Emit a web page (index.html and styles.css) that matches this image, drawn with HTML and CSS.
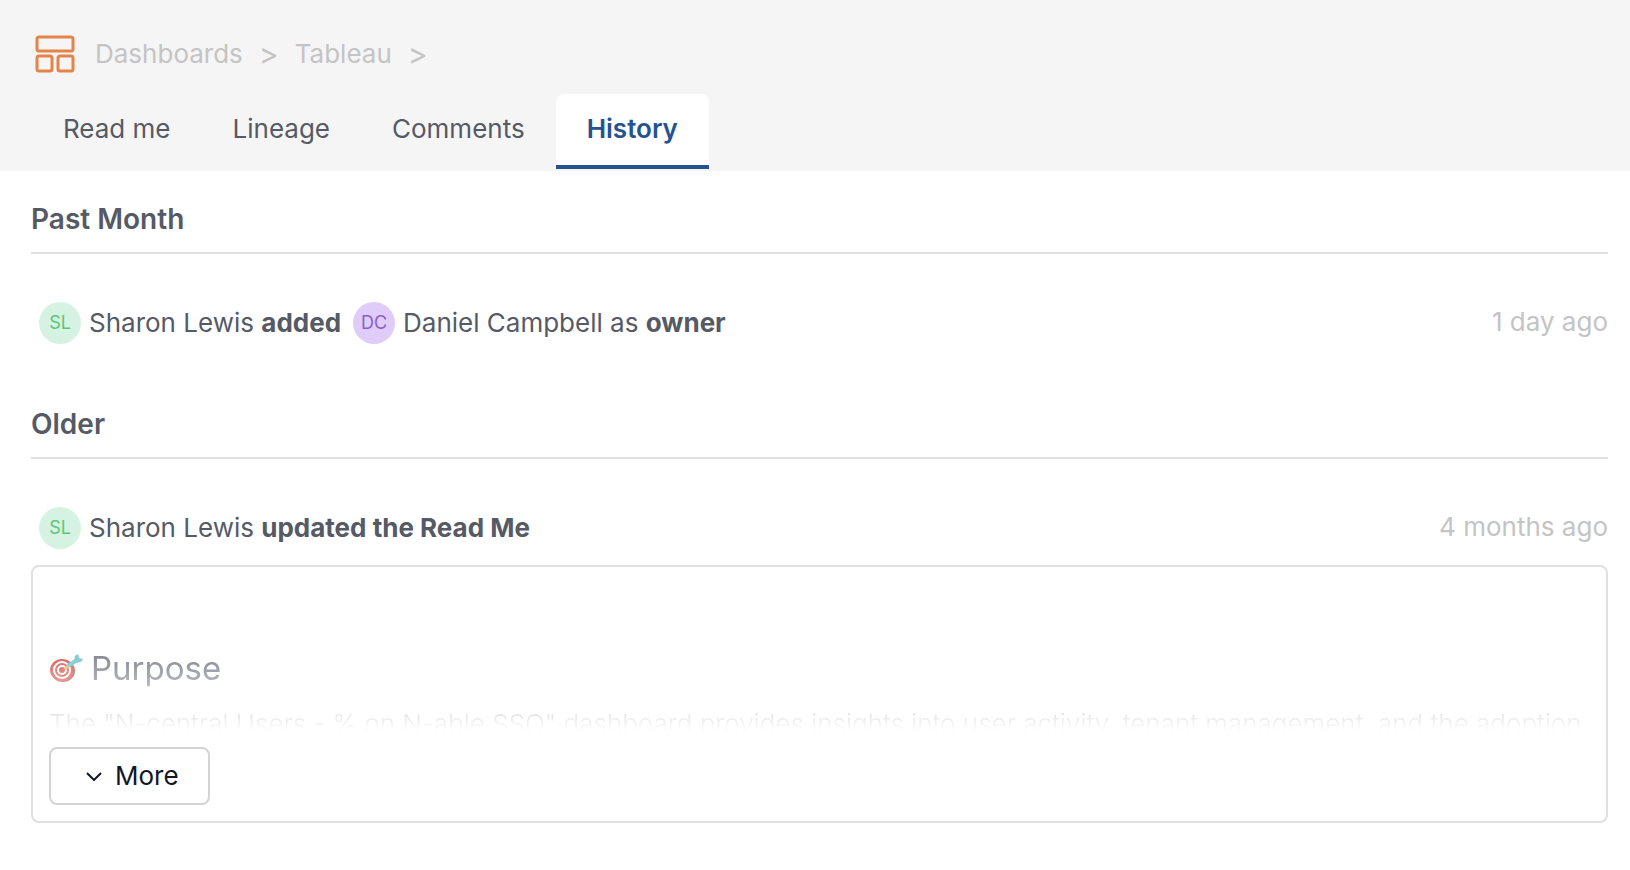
FILE: index.html
```html
<!DOCTYPE html>
<html lang="en">
<head>
    <meta charset="utf-8"/>
    <title>History</title>
    <link rel="stylesheet" href="styles.css">
</head>

<body>
<header class="header">
    <nav class="breadcrumb" aria-label="Breadcrumb">
        <svg class="logo" viewBox="0 0 40 38" fill="none" stroke="#e4844a" stroke-width="3">
            <rect x="2" y="2" width="36" height="14" rx="2"/>
            <rect x="2" y="21" width="15" height="15" rx="2"/>
            <rect x="23" y="21" width="15" height="15" rx="2"/>
        </svg>
        <a href="#">Dashboards</a>
        <span class="separator">&gt;</span>
        <a href="#">Tableau</a>
        <span class="separator">&gt;</span>
    </nav>
    <div class="tabs" role="tablist">
        <button class="tab" role="tab">Read me</button>
        <button class="tab" role="tab">Lineage</button>
        <button class="tab" role="tab">Comments</button>
        <button class="tab active" role="tab" aria-selected="true">History</button>
    </div>
</header>

<main class="history">
    <section class="period">
        <h2>Past Month</h2>
        <div class="entry">
            <div class="event">
                <span class="avatar green">SL</span>
                <span>Sharon Lewis <b>added</b></span>
                <span class="avatar purple">DC</span>
                <span>Daniel Campbell as <b>owner</b></span>
            </div>
            <span class="time">1 day ago</span>
        </div>
    </section>

    <section class="period">
        <h2>Older</h2>
        <div class="entry">
            <div class="event">
                <span class="avatar green">SL</span>
                <span>Sharon Lewis <b>updated the Read Me</b></span>
            </div>
            <span class="time">4 months ago</span>
        </div>
        <div class="card">
            <div class="preview">
                <h3>
                    <svg class="target" viewBox="0 0 34 30">
                        <ellipse cx="14" cy="18" rx="12" ry="11" fill="#8e1a16"/>
                        <ellipse cx="13" cy="17" rx="12" ry="11" fill="#c9261d"/>
                        <ellipse cx="13" cy="17" rx="9" ry="9" fill="#fff"/>
                        <ellipse cx="13" cy="17" rx="7" ry="7" fill="#c9261d"/>
                        <ellipse cx="13" cy="17" rx="5" ry="5" fill="#fff"/>
                        <ellipse cx="13" cy="17" rx="3" ry="3" fill="#c9261d"/>
                        <path d="M16 16L20 12" stroke="#d9a928" stroke-width="3"/>
                        <path d="M19 13L28 7" stroke="#4bb3c3" stroke-width="4"/>
                        <path d="M25 8L26 3L29 1L30 5L34 6L32 9L27 10Z" fill="#4bb3c3"/>
                    </svg>
                    Purpose
                </h3>
                <p>The "N-central Users - % on N-able SSO" dashboard provides insights into user activity, tenant management, and the adoption</p>
            </div>
            <button class="more">
                <svg class="chevron" viewBox="0 0 16 10" fill="none" stroke="currentColor" stroke-width="2">
                    <path d="M1 2L8 9L15 2"/>
                </svg>
                More
            </button>
        </div>
    </section>
</main>
</body>
</html>
```
FILE: styles.css
```css
* {
    box-sizing: border-box;
    margin: 0;
    padding: 0;
}
body {
    font-family: Inter, "Liberation Sans", sans-serif;
    font-size: 26px;
    line-height: 32px;
    color: #555a66;
    background: #fff;
}
button {
    font: inherit;
    color: inherit;
    border: none;
    background: none;
    cursor: pointer;
}
.header {
    padding: 34px 32px 2px;
    background: #f5f5f5;
}
.breadcrumb {
    display: flex;
    align-items: center;
    gap: 16px;
    height: 40px;
    padding-left: 3px;
    color: #c4c4c4;
}
.breadcrumb a {
    color: inherit;
    text-decoration: none;
}
.separator {
    font-size: 30px;
}
.logo {
    width: 40px;
    height: 38px;
    margin-right: 4px;
}
.tabs {
    display: flex;
    margin-top: 20px;
}
.tab {
    height: 75px;
    padding: 0 31px 6px;
    border-radius: 8px 8px 0 0;
}
.tab.active {
    font-weight: 600;
    color: #255290;
    background: #fff;
    box-shadow: inset 0 -4px #255290;
}
.history {
    padding: 0 22px 0 31px;
}
.period {
    padding-top: 32px;
}
.period h2 {
    padding-bottom: 17px;
    border-bottom: 2px solid #e0e0e0;
    font-size: 28px;
    font-weight: 600;
}
.entry {
    display: flex;
    justify-content: space-between;
    margin-top: 48px;
}
.event {
    display: flex;
    align-items: center;
    gap: 8px;
    padding-left: 8px;
}
.avatar {
    width: 42px;
    height: 42px;
    border-radius: 50%;
    font-size: 18px;
    line-height: 42px;
    text-align: center;
}
.avatar.green {
    color: #5bc878;
    background: #d5f2e2;
}
.avatar.purple {
    margin-left: 4px;
    color: #8f5bcf;
    background: #e0ccf9;
}
.time {
    padding-top: 4px;
    color: #c4c4c4;
}
.period + .period {
    padding-top: 64px;
}
.card {
    margin-top: 16px;
    padding: 0 16px 16px;
    border: 2px solid #e0e0e0;
    border-radius: 8px;
}
/* text fades out towards the button */
.preview {
    height: 164px;
    padding-top: 81px;
    overflow: hidden;
    -webkit-mask-image: linear-gradient(#000 35%, transparent);
    mask-image: linear-gradient(#000 35%, transparent);
}
.preview h3 {
    display: flex;
    align-items: center;
    gap: 8px;
    font-size: 33px;
    font-weight: 400;
    line-height: 40px;
}
.preview p {
    margin-top: 20px;
    font-weight: 300;
    white-space: nowrap;
}
.target {
    width: 34px;
    height: 30px;
}
.more {
    display: flex;
    align-items: center;
    gap: 13px;
    height: 58px;
    margin-top: 16px;
    padding: 0 29px 0 35px;
    border: 2px solid #d4d4d4;
    border-radius: 8px;
    color: #101726;
}
.chevron {
    width: 16px;
    height: 10px;
}
```
